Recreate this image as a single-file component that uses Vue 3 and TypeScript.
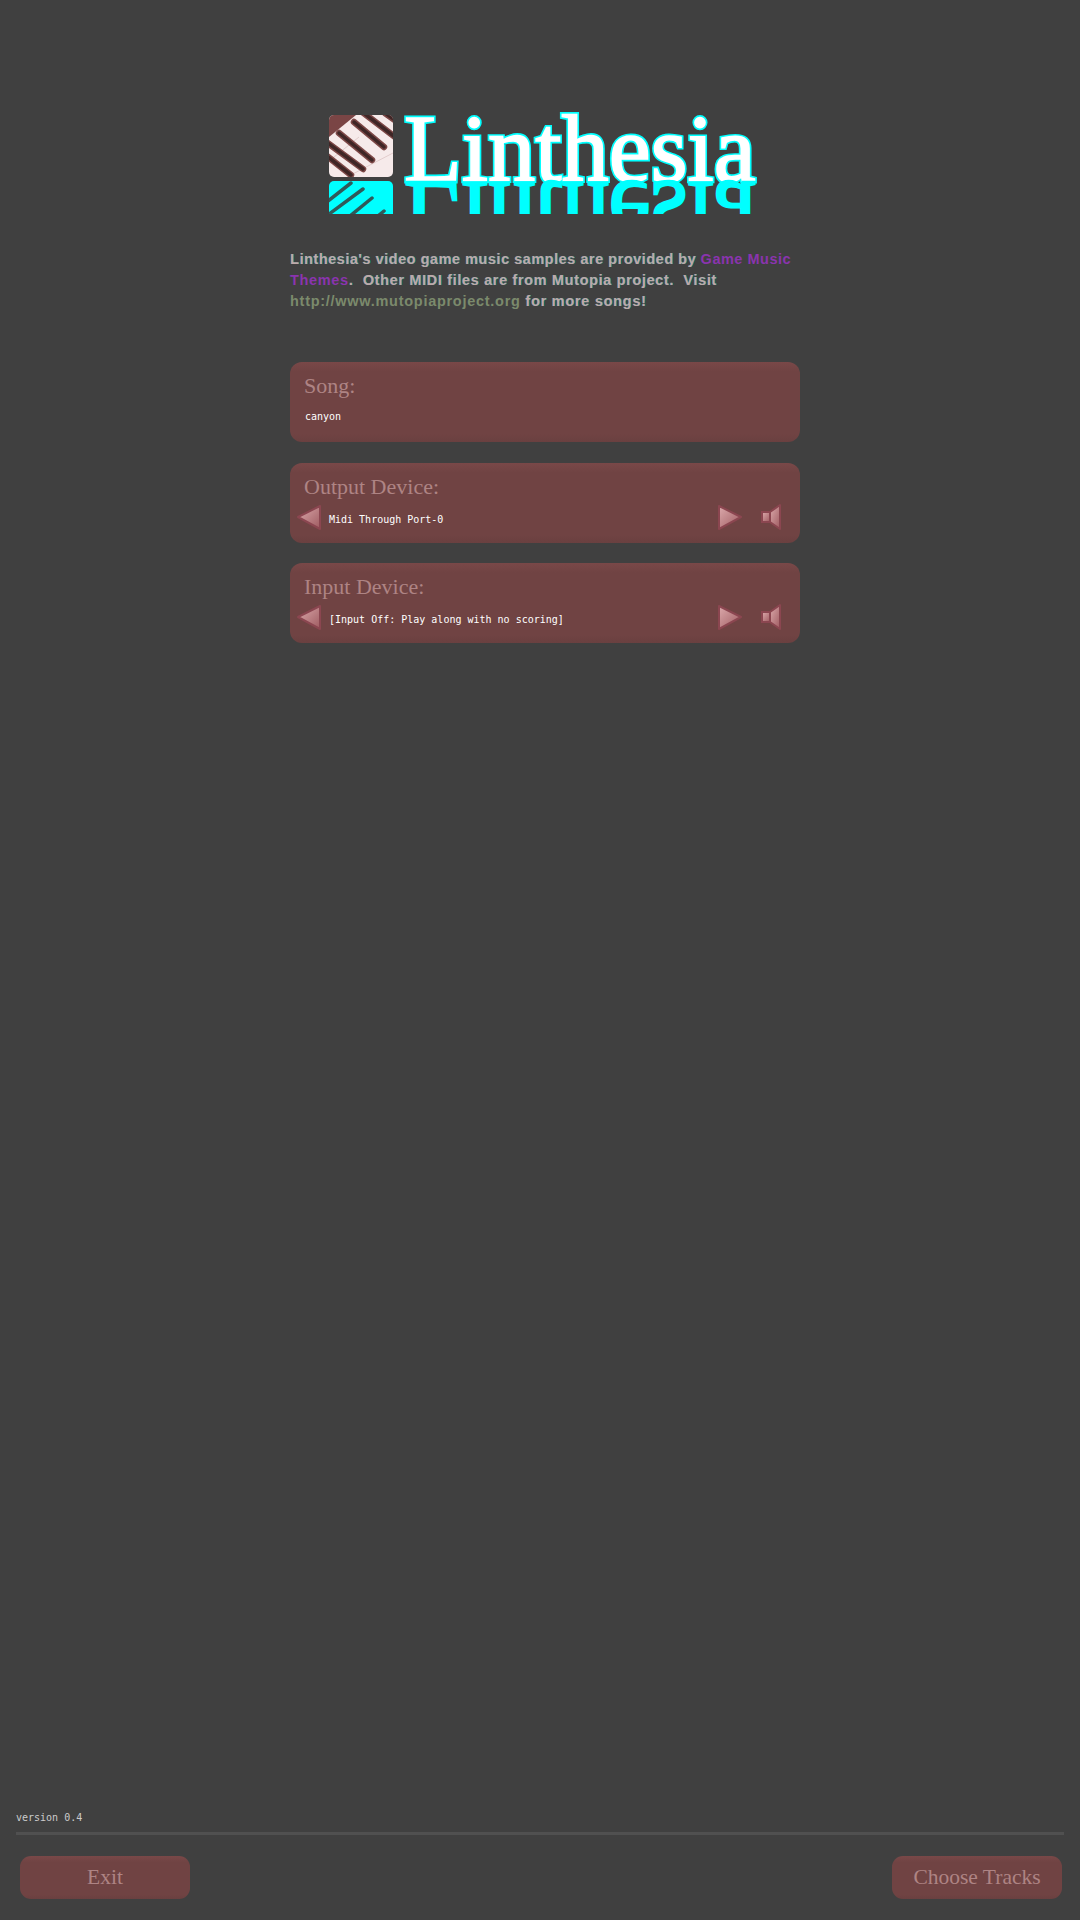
<script setup lang="ts">
interface Device {
  title: string
  value: string
}

const devices: Device[] = [
  { title: 'Output Device:', value: 'Midi Through Port-0' },
  { title: 'Input Device:', value: '[Input Off: Play along with no scoring]' }
]

// black keys of the logo, in the 64x62 box of the icon
const keys = [
  [56, -2, 70, 8],
  [32, -4, 66, 22],
  [25, 7, 55, 32],
  [10, 18, 43, 45],
  [-4, 26, 34, 54],
  [-6, 38, 22, 60]
]
</script>

<template>
  <div class="page">
    <main class="center">
      <div class="logo">
        <div class="logo-row">
          <svg class="logo-icon" width="64" height="62" viewBox="0 0 64 62">
            <defs>
              <clipPath id="iconClip"><rect width="64" height="62" rx="5" /></clipPath>
            </defs>
            <g clip-path="url(#iconClip)">
              <rect width="64" height="62" fill="#f6eaea" />
              <path d="M0 0H27L0 22Z" fill="#7a4545" />
              <path d="M18 62L64 38M0 46L30 22" stroke="#e2cccc" stroke-width="1" />
              <g v-for="(k, i) in keys" :key="i">
                <line :x1="k[0]" :y1="k[1]" :x2="k[2]" :y2="k[3]" stroke="#7c4746" stroke-width="6.5" stroke-linecap="round" />
                <line :x1="k[0]" :y1="k[1]" :x2="k[2]" :y2="k[3]" stroke="#3f2626" stroke-width="3.5" stroke-linecap="round" />
              </g>
            </g>
          </svg>
          <span class="logo-text">Linthesia</span>
        </div>
        <div class="logo-row reflection">
          <svg class="logo-icon" width="64" height="62" viewBox="0 0 64 62">
            <rect width="64" height="62" rx="5" fill="#0ff" />
            <g v-for="(k, i) in keys" :key="i">
              <line :x1="k[0]" :y1="k[1]" :x2="k[2]" :y2="k[3]" stroke="#2f5a5a" stroke-width="3.5" stroke-linecap="round" />
            </g>
          </svg>
          <span class="logo-text mirrored">Linthesia</span>
        </div>
      </div>

      <div class="intro">
        <div class="line">Linthesia's video game music samples are provided by <span class="purple">Game Music</span></div>
        <div class="line line-two"><span class="purple">Themes</span>.&nbsp; Other MIDI files are from Mutopia project.&nbsp; Visit</div>
        <div class="line line-three"><span class="green">http://www.mutopiaproject.org</span> for more songs!</div>
      </div>

      <section class="panel">
        <h2>Song:</h2>
        <div class="song-name">canyon</div>
      </section>

      <section v-for="d in devices" :key="d.title" class="panel">
        <h2>{{ d.title }}</h2>
        <div class="device-row">
          <svg class="arrow" width="26" height="26" viewBox="0 0 26 26">
            <defs>
              <linearGradient id="leftGrad" x1="0" y1="0" x2="1" y2="1">
                <stop offset="0" stop-color="#dcaaac" />
                <stop offset="1" stop-color="#9e5a60" />
              </linearGradient>
            </defs>
            <path d="M2 13L24 2V25Z" fill="url(#leftGrad)" stroke="#8b4650" stroke-width="2" stroke-linejoin="round" />
          </svg>
          <span class="device-name">{{ d.value }}</span>
          <svg class="arrow" width="26" height="26" viewBox="0 0 26 26">
            <defs>
              <linearGradient id="rightGrad" x1="0" y1="0" x2="1" y2="1">
                <stop offset="0" stop-color="#dcaaac" />
                <stop offset="1" stop-color="#9e5a60" />
              </linearGradient>
            </defs>
            <path d="M2 2L24 13L2 25Z" fill="url(#rightGrad)" stroke="#8b4650" stroke-width="2" stroke-linejoin="round" />
          </svg>
          <svg class="speaker" width="21" height="28" viewBox="0 0 21 28">
            <defs>
              <linearGradient id="speakerGrad" x1="0" y1="0" x2="1" y2="1">
                <stop offset="0" stop-color="#dcaaac" />
                <stop offset="1" stop-color="#9e5a60" />
              </linearGradient>
            </defs>
            <path d="M9 9L19 2V26L9 19Z" fill="url(#speakerGrad)" stroke="#8b4650" stroke-width="2" stroke-linejoin="round" />
            <rect x="1" y="9" width="8" height="10" fill="url(#speakerGrad)" stroke="#8b4650" stroke-width="2" />
          </svg>
        </div>
      </section>
    </main>

    <footer class="footer">
      <div class="version">version 0.4</div>
      <div class="rule"></div>
      <div class="buttons">
        <button class="btn">Exit</button>
        <button class="btn">Choose Tracks</button>
      </div>
    </footer>
  </div>
</template>

<style scoped>
.page {
  width: 1080px;
  height: 1920px;
  background: #404040;
  display: flex;
  flex-direction: column;
  justify-content: space-between;
  overflow: hidden;
}

.center {
  width: 510px;
  margin-left: 290px;
  padding-top: 110px;
}

.logo {
  margin-left: 39px;
  width: 440px;
}

.logo-row {
  display: flex;
  height: 69px;
  align-items: flex-start;
  padding-top: 5px;
  box-sizing: border-box;
  position: relative;
}

.logo-icon {
  flex: none;
  display: block;
}

.logo-text {
  position: relative;
  isolation: isolate;
  font-family: "Liberation Serif", serif;
  font-size: 94.5px;
  line-height: 66px;
  height: 66px;
  margin-top: 1px;
  margin-left: 11px;
  color: #fff;
  -webkit-text-stroke: 1.7px #fff;
}

/* cyan halo behind the white letters */
.logo-text::before {
  content: "Linthesia";
  position: absolute;
  left: 0;
  top: 0;
  z-index: -1;
  -webkit-text-stroke: 5px #0ff;
}

.reflection {
  height: 36px;
  padding-top: 0;
  overflow: hidden;
  margin-top: -1px;
}

.reflection .logo-icon {
  margin-top: 3px;
  transform: scaleY(-1);
}

.mirrored {
  margin-top: 3px;
  color: #0ff;
  -webkit-text-stroke: 2.5px #0ff;
  transform: scaleY(-1);
}

.mirrored::before {
  content: none;
}

.intro {
  margin-top: 35px;
  font-family: "Liberation Sans", sans-serif;
  font-weight: bold;
  font-size: 14.5px;
  line-height: 21px;
  letter-spacing: 0.52px;
  white-space: nowrap;
  color: #bfa9a9;
  text-shadow: 1px 0 0 rgba(0, 170, 170, 0.6);
}

.line-two {
  letter-spacing: 0.64px;
}

.line-three {
  letter-spacing: 0.72px;
}

.purple {
  color: #8a34ae;
  text-shadow: none;
}

.green {
  color: #7b8a6c;
  text-shadow: none;
}

.panel {
  height: 80px;
  box-sizing: border-box;
  margin-top: 21px;
  padding-top: 10px;
  border-radius: 12px;
  background: linear-gradient(#794848, #704343 12%, #704343 90%, #6a4040);
}

.intro + .panel {
  margin-top: 50px;
}

.panel:last-child {
  margin-top: 20px;
}

h2 {
  margin: 0 0 4px 14px;
  font-family: "Liberation Serif", serif;
  font-weight: normal;
  font-size: 22px;
  line-height: 28px;
  color: #ae8484;
}

.song-name {
  margin: 10px 0 0 15px;
  font-family: "DejaVu Sans Mono", monospace;
  font-size: 10px;
  line-height: 14px;
  color: #fff;
}

.device-row {
  display: flex;
  align-items: center;
  height: 28px;
  padding-left: 6px;
  padding-right: 18px;
}

.arrow,
.speaker {
  margin-top: -4px;
}

.device-name {
  flex: 1;
  margin-left: 7px;
  font-family: "DejaVu Sans Mono", monospace;
  font-size: 10px;
  color: #fff;
}

.speaker {
  margin-left: 18px;
}

.footer {
  padding: 0 16px 21px;
}

.version {
  font-family: "DejaVu Sans Mono", monospace;
  font-size: 10px;
  line-height: 14px;
  color: #ccc;
}

.rule {
  height: 3px;
  margin-top: 7px;
  background: #505050;
}

.buttons {
  display: flex;
  justify-content: space-between;
  margin-top: 21px;
  padding: 0 2px 0 4px;
}

.btn {
  width: 170px;
  height: 43px;
  padding: 0;
  border: 0;
  border-radius: 11px;
  background: linear-gradient(#794848, #704343 15%, #704343 90%, #6a4040);
  font-family: "Liberation Serif", serif;
  font-size: 21.5px;
  color: #ae8484;
}
</style>

<style>
body {
  background: #404040;
}
</style>
